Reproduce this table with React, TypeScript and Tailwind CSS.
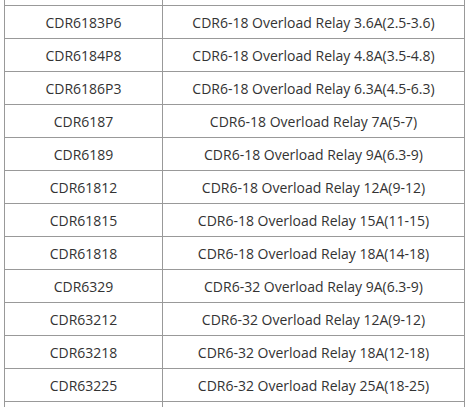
const rows: [string, string][] = [
  ["", ""],
  ["CDR6183P6", "CDR6-18 Overload Relay 3.6A(2.5-3.6)"],
  ["CDR6184P8", "CDR6-18 Overload Relay 4.8A(3.5-4.8)"],
  ["CDR6186P3", "CDR6-18 Overload Relay 6.3A(4.5-6.3)"],
  ["CDR6187", "CDR6-18 Overload Relay 7A(5-7)"],
  ["CDR6189", "CDR6-18 Overload Relay 9A(6.3-9)"],
  ["CDR61812", "CDR6-18 Overload Relay 12A(9-12)"],
  ["CDR61815", "CDR6-18 Overload Relay 15A(11-15)"],
  ["CDR61818", "CDR6-18 Overload Relay 18A(14-18)"],
  ["CDR6329", "CDR6-32 Overload Relay 9A(6.3-9)"],
  ["CDR63212", "CDR6-32 Overload Relay 12A(9-12)"],
  ["CDR63218", "CDR6-32 Overload Relay 18A(12-18)"],
  ["CDR63225", "CDR6-32 Overload Relay 25A(18-25)"],
  ["", ""],
];

export default function App() {
  return (
    <div className="h-[407px] w-[469px] overflow-hidden bg-white pl-[4px]">
      {/* rows above and below are cut by the frame, so they stay empty */}
      <table
        className="-mt-[28px] w-[461px] table-fixed border-collapse text-[14px] text-[#333]"
        style={{ fontFamily: '"Open Sans", sans-serif' }}
      >
        <colgroup>
          <col className="w-[158px]" />
          <col />
        </colgroup>
        <tbody>
          {rows.map(([code, name], i) => (
            <tr key={i} className="h-[33px]">
              <td className="border border-[#999] p-0 text-center">{code || "\u00a0"}</td>
              <td className="border border-[#999] p-0 text-center">{name || "\u00a0"}</td>
            </tr>
          ))}
        </tbody>
      </table>
    </div>
  );
}
